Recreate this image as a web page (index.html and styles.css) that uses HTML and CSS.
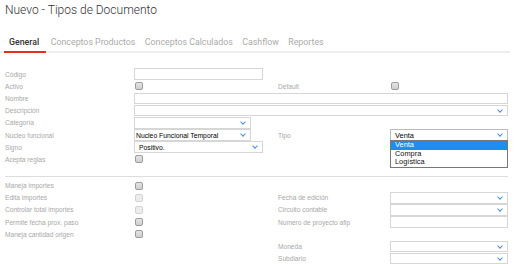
FILE: index.html
```html
<!DOCTYPE html>
<html lang="es">
<head>
    <meta charset="UTF-8">
    <title>Nuevo - Tipos de Documento</title>
    <link rel="stylesheet" href="styles.css">
</head>
<body>
    <h1 class="page-title">Nuevo - Tipos de Documento</h1>

    <nav class="tabs">
        <span class="tab active">General</span>
        <span class="tab">Conceptos Productos</span>
        <span class="tab">Conceptos Calculados</span>
        <span class="tab">Cashflow</span>
        <span class="tab">Reportes</span>
    </nav>

    <!-- Datos generales -->
    <div class="form-grid first">
        <label class="lbl">Código</label>
        <div class="ctrl"><input class="field w-code" type="text"></div>
        <span></span><span></span>

        <label class="lbl">Activo</label>
        <div class="ctrl"><span class="check"></span></div>
        <label class="lbl">Default</label>
        <div class="ctrl"><span class="check"></span></div>

        <label class="lbl">Nombre</label>
        <div class="ctrl span3"><input class="field full" type="text"></div>

        <label class="lbl">Descripción</label>
        <div class="ctrl span3"><div class="select full"><span class="val"></span><span class="arrow"></span></div></div>

        <label class="lbl">Categoría</label>
        <div class="ctrl"><div class="select w-cat"><span class="val"></span><span class="arrow"></span></div></div>
        <span></span><span></span>

        <label class="lbl">Núcleo funcional</label>
        <div class="ctrl"><div class="select w-cat"><span class="val">Nucleo Funcional Temporal</span><span class="arrow"></span></div></div>
        <label class="lbl">Tipo</label>
        <div class="ctrl tipo">
            <div class="select full open"><span class="val">Venta</span><span class="arrow"></span></div>
            <ul class="dropdown">
                <li class="selected">Venta</li>
                <li>Compra</li>
                <li>Logística</li>
            </ul>
        </div>

        <label class="lbl">Signo</label>
        <div class="ctrl"><div class="select w-code"><span class="val pad">Positivo.</span><span class="arrow"></span></div></div>
        <span></span><span></span>

        <label class="lbl">Acepta reglas</label>
        <div class="ctrl"><span class="check"></span></div>
        <span></span><span></span>
    </div>

    <hr class="separator">

    <!-- Importes -->
    <div class="form-grid">
        <label class="lbl">Maneja importes</label>
        <div class="ctrl"><span class="check"></span></div>
        <span></span><span></span>

        <label class="lbl">Edita importes</label>
        <div class="ctrl"><span class="check disabled"></span></div>
        <label class="lbl">Fecha de edición</label>
        <div class="ctrl"><div class="select full"><span class="val"></span><span class="arrow"></span></div></div>

        <label class="lbl">Controlar total importes</label>
        <div class="ctrl"><span class="check disabled"></span></div>
        <label class="lbl">Circuito contable</label>
        <div class="ctrl"><div class="select full"><span class="val"></span><span class="arrow"></span></div></div>

        <label class="lbl">Permite fecha prox. paso</label>
        <div class="ctrl"><span class="check"></span></div>
        <label class="lbl">Numero de proyecto afip</label>
        <div class="ctrl"><input class="field full" type="text"></div>

        <label class="lbl">Maneja cantidad origen</label>
        <div class="ctrl"><span class="check"></span></div>
        <span></span><span></span>

        <span></span><span></span>
        <label class="lbl">Moneda</label>
        <div class="ctrl"><div class="select full"><span class="val"></span><span class="arrow"></span></div></div>

        <span></span><span></span>
        <label class="lbl">Subdiario</label>
        <div class="ctrl"><div class="select full"><span class="val"></span><span class="arrow"></span></div></div>
    </div>
</body>
</html>
```

FILE: styles.css
```css
body {
    margin: 0;
    padding: 0;
    background-color: #fff;
    font-family: 'Liberation Sans', Arial, sans-serif;
    color: #333;
    overflow: hidden;
}

.page-title {
    font-family: Roboto, 'Liberation Sans', sans-serif;
    font-weight: 300;
    font-size: 12px;
    color: #333;
    margin: 0;
    padding: 3px 0 0 5px;
    height: 28px;
    box-sizing: border-box;
}

/* Tabs */
.tabs {
    display: flex;
    margin-top: 7px;
    width: 510px;
    border-bottom: 2px solid #eee;
    font-family: Roboto, 'Liberation Sans', sans-serif;
    font-size: 8.8px;
}

.tab {
    color: #aaa;
    padding: 2px 5px 4px 4.5px;
}

.tab.active {
    color: #333;
    font-weight: 500;
    margin-left: 4px;
    padding-left: 5px;
    padding-right: 7px;
    border-bottom: 2px solid #e53020;
    margin-bottom: -2px;
}

/* Form grid */
.form-grid {
    display: grid;
    grid-template-columns: 129px 144px 112px 118px;
    grid-auto-rows: 12.2px;
    padding-left: 5px;
    font-size: 6.6px;
}

.form-grid.first {
    margin-top: 15px;
}

.lbl {
    color: #a8a8a8;
    display: flex;
    align-items: center;
}

.ctrl {
    display: flex;
    align-items: center;
    position: relative;
}

.span3 {
    grid-column: span 3;
}

.field, .select {
    height: 11.5px;
    box-sizing: border-box;
    border: 1px solid #d6d6d6;
    background: #fff;
    margin: 0;
    padding: 0;
}

.w-code { width: 129px; }
.w-cat { width: 117px; }
.full { width: 100%; }

.select {
    display: flex;
    align-items: center;
    justify-content: space-between;
    font-size: 6.8px;
    color: #000;
}

.select .val {
    padding-left: 1px;
}

.select .val.pad {
    padding-left: 4px;
}

.arrow {
    width: 3px;
    height: 3px;
    border-right: 1px solid #4a8fdc;
    border-bottom: 1px solid #4a8fdc;
    transform: rotate(45deg);
    margin: -2px 5px 0 0;
}

.select.open {
    border-color: #bbb;
    font-size: 7.4px;
}

.select.open .val {
    padding-left: 4px;
}

/* Opened list of Tipo */
.dropdown {
    position: absolute;
    top: 11.5px;
    left: 0;
    width: 100%;
    box-sizing: border-box;
    margin: 0;
    padding: 0;
    list-style: none;
    border: 1px solid #777;
    background: #fff;
    font-size: 7.4px;
    color: #111;
    z-index: 2;
}

.dropdown li {
    height: 8.4px;
    line-height: 8.4px;
    padding-left: 4px;
}

.dropdown li.selected {
    background-color: #1e8cf0;
    color: #fff;
}

/* Checkboxes */
.check {
    display: inline-block;
    width: 6px;
    height: 6px;
    border: 1px solid #9c9c9c;
    border-radius: 2px;
    background: linear-gradient(#e4e4e4, #cfcfcf);
    margin-left: 1px;
}

.check.disabled {
    border-color: #d4d4d4;
    background: #ededed;
}

.separator {
    border: none;
    border-top: 1px solid #ddd;
    margin: 10px 0 3px 5px;
    width: 503px;
}
```
